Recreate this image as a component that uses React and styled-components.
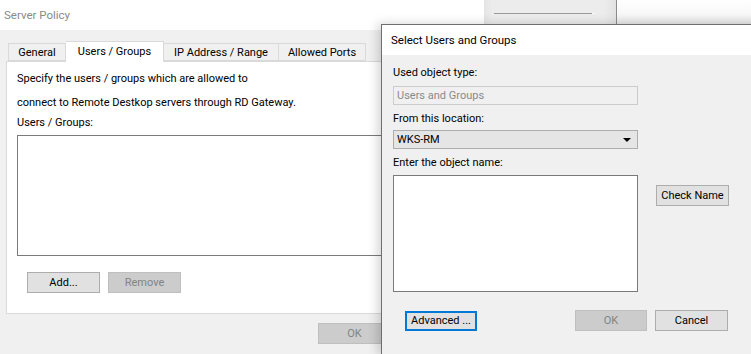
import React from 'react'
import styled, { createGlobalStyle } from 'styled-components'

const GlobalStyle = createGlobalStyle`
  html, body {
    margin: 0;
    padding: 0;
    background: #ffffff;
    overflow: hidden;
  }
  body {
    font-family: Roboto, "Liberation Sans", sans-serif;
    font-size: 11px;
    color: #000;
  }
`;

const Desktop = styled.div`
  position: relative;
  width: 751px;
  height: 354px;
  overflow: hidden;
  background: #ffffff;
`;

/* ---------- back window ---------- */

const PolicyWindow = styled.div`
  position: absolute;
  left: 0;
  top: 0;
  width: 440px;
  height: 354px;
  display: flex;
  flex-direction: column;
  background: #f0f0f0;
`;

const TitleBar = styled.div`
  height: ${p => p.$h}px;
  flex: none;
  background: #ffffff;
  display: flex;
  align-items: center;
  padding-left: ${p => p.$pad}px;
  color: ${p => (p.$dim ? '#8a8a8a' : '#000')};
  font-size: 11.5px;
`;

const PolicyBody = styled.div`
  padding: 11px 0 0 6px;
  display: flex;
  flex-direction: column;
`;

const TabRow = styled.div`
  display: flex;
  align-items: flex-end;
  padding-left: 2px;
  height: 20px;
  position: relative;
  z-index: 1;
`;

const Tab = styled.div`
  height: ${p => (p.$active ? 21 : 18)}px;
  margin-bottom: ${p => (p.$active ? -1 : 0)}px;
  width: ${p => p.$w}px;
  box-sizing: border-box;
  border: 1px solid #d9d9d9;
  border-bottom: ${p => (p.$active ? 'none' : '1px solid #d9d9d9')};
  border-left: ${p => (p.$noLeft ? 'none' : '1px solid #d9d9d9')};
  background: ${p => (p.$active ? '#ffffff' : '#f0f0f0')};
  display: flex;
  align-items: center;
  justify-content: center;
  padding-top: 1px;
  padding-bottom: ${p => (p.$active ? 3 : 0)}px;
`;

const TabPanel = styled.div`
  width: 420px;
  height: 253px;
  box-sizing: border-box;
  border: 1px solid #d9d9d9;
  background: #ffffff;
  padding: 8px 0 0 10px;
  display: flex;
  flex-direction: column;
`;

const Line = styled.div`
  height: ${p => p.$h}px;
  line-height: ${p => p.$h}px;
  margin-top: ${p => p.$mt || 0}px;
  color: ${p => (p.$dim ? '#8a8a8a' : '#000')};
  white-space: nowrap;
`;

const ListBox = styled.div`
  width: 420px;
  height: 121px;
  box-sizing: border-box;
  border: 1px solid #7a7a7a;
  background: #ffffff;
  margin-top: ${p => p.$mt || 0}px;
`;

const ButtonRow = styled.div`
  display: flex;
  gap: ${p => p.$gap}px;
  margin-top: ${p => p.$mt}px;
  padding-left: ${p => p.$pl || 0}px;
  align-items: center;
`;

const Button = styled.div`
  width: ${p => p.$w || 73}px;
  height: ${p => p.$h || 21}px;
  box-sizing: border-box;
  border: ${p => (p.$focus ? '2px solid #0078d7' : p.$disabled ? '1px solid #bfbfbf' : '1px solid #adadad')};
  background: ${p => (p.$disabled ? '#cccccc' : '#e1e1e1')};
  color: ${p => (p.$disabled ? '#838383' : '#000')};
  display: flex;
  align-items: center;
  justify-content: center;
  white-space: nowrap;
  margin-left: ${p => p.$ml || 0}px;
`;

const Footer = styled.div`
  display: flex;
  padding: 9px 0 0 312px;
`;

/* ---------- window peeking behind ---------- */

const BehindWindow = styled.div`
  position: absolute;
  left: 484px;
  top: 0;
  width: 132px;
  height: 24px;
  background: linear-gradient(to right, #e4e4e4 0px, #ececec 8px, #ececec 120px, #e2e2e2 132px);
  border-right: 1px solid #8c8c8c;
  z-index: 2;
`;

const BehindRule = styled.div`
  position: absolute;
  left: 10px;
  top: 13px;
  width: 98px;
  height: 1px;
  background: #9a9a9a;
  border-right: 3px solid #fafafa;
`;

const ShadeStrip = styled.div`
  position: absolute;
  left: 617px;
  top: 0;
  width: 140px;
  height: 24px;
  background: linear-gradient(to bottom, #ffffff 0px, #f8f8f8 14px, #e8e8e8 23px);
  z-index: 2;
`;

/* ---------- front dialog ---------- */

const Dialog = styled.div`
  position: absolute;
  left: 381px;
  top: 24px;
  width: 380px;
  height: 329px;
  border: 1px solid #6e6e6e;
  background: #f0f0f0;
  box-shadow: -3px 0 10px rgba(0, 0, 0, 0.18);
  display: flex;
  flex-direction: column;
  z-index: 3;
`;

const DialogBody = styled.div`
  display: grid;
  grid-template-columns: 245px 73px;
  column-gap: 18px;
  padding: 10px 0 0 11px;
`;

const Field = styled.div`
  width: 245px;
  height: ${p => p.$h}px;
  box-sizing: border-box;
  border: 1px solid ${p => p.$border};
  background: ${p => p.$bg};
  color: ${p => (p.$dim ? '#8a8a8a' : '#000')};
  display: flex;
  align-items: center;
  justify-content: space-between;
  padding: 0 6px 0 3px;
  margin-top: ${p => p.$mt || 0}px;
`;

const Arrow = styled.span`
  width: 0;
  height: 0;
  border-left: 4px solid transparent;
  border-right: 4px solid transparent;
  border-top: 4px solid #000;
`;

const Column = styled.div`
  display: flex;
  flex-direction: column;
`;

const SideColumn = styled.div`
  display: flex;
  flex-direction: column;
  justify-content: flex-start;
  padding-top: ${p => p.$pt}px;
`;

export default function App() {
  return (
    <>
      <GlobalStyle />
      <Desktop>
        <PolicyWindow>
          <TitleBar $h={30} $pad={4} $dim>Server Policy</TitleBar>
          <PolicyBody>
            <TabRow>
              <Tab $w={58}>General</Tab>
              <Tab $w={98} $active $noLeft>Users / Groups</Tab>
              <Tab $w={115} $noLeft>IP Address / Range</Tab>
              <Tab $w={87} $noLeft>Allowed Ports</Tab>
            </TabRow>
            <TabPanel>
              <Line $h={18}>Specify the users / groups which are allowed to</Line>
              <Line $h={16} $mt={7}>connect to Remote Destkop servers through RD Gateway.</Line>
              <Line $h={16} $mt={4}>Users / Groups:</Line>
              <ListBox $mt={4} />
              <ButtonRow $gap={8} $mt={16} $pl={10}>
                <Button>Add...</Button>
                <Button $disabled>Remove</Button>
              </ButtonRow>
            </TabPanel>
            <Footer>
              <Button $disabled>OK</Button>
            </Footer>
          </PolicyBody>
        </PolicyWindow>

        <BehindWindow>
          <BehindRule />
        </BehindWindow>
        <ShadeStrip />

        <Dialog>
          <TitleBar $h={30} $pad={9}>Select Users and Groups</TitleBar>
          <DialogBody>
            <Column>
              <Line $h={16}>Used object type:</Line>
              <Field $h={19} $mt={5} $border="#cccccc" $bg="#f0f0f0" $dim>Users and Groups</Field>
              <Line $h={16} $mt={6}>From this location:</Line>
              <Field $h={19} $mt={3} $border="#adadad" $bg="#e5e5e5">
                WKS-RM
                <Arrow />
              </Field>
              <Line $h={16} $mt={6}>Enter the object name:</Line>
              <Field $h={117} $mt={4} $border="#7a7a7a" $bg="#ffffff" />
            </Column>
            <SideColumn $pt={120}>
              <Button $h={21}>Check Name</Button>
            </SideColumn>
          </DialogBody>
          <ButtonRow $gap={8} $mt={18} $pl={23}>
            <Button $w={72} $h={20} $focus>Advanced ...</Button>
            <Button $w={72} $disabled $ml={90}>OK</Button>
            <Button $w={73}>Cancel</Button>
          </ButtonRow>
        </Dialog>
      </Desktop>
    </>
  )
}
